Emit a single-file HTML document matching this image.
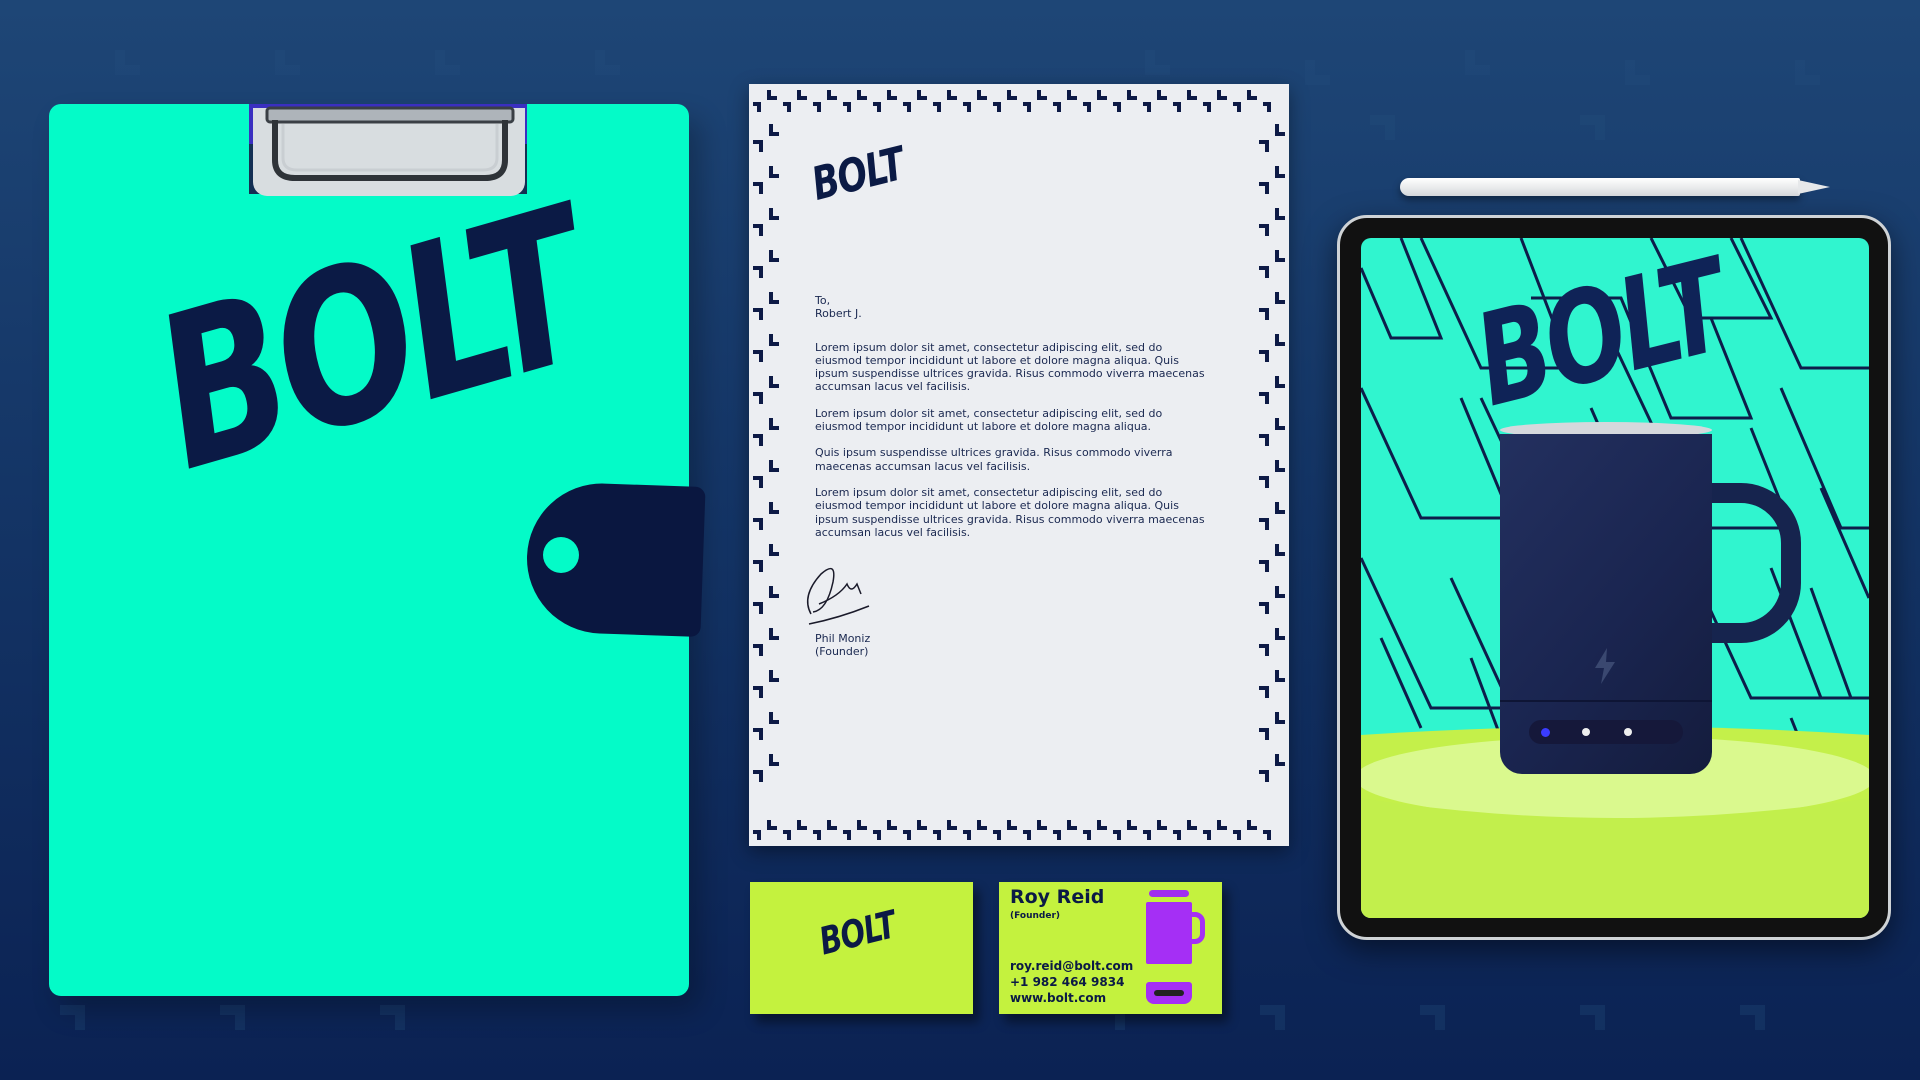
<!DOCTYPE html>
<html><head><style>
*{margin:0;padding:0;box-sizing:border-box}
body{width:1920px;height:1080px;overflow:hidden;position:relative;background:linear-gradient(180deg,#1e4676 0%,#143566 45%,#0b2253 100%);font-family:"Liberation Sans",sans-serif}
.abs{position:absolute}
.logo{position:absolute;font-family:"DejaVu Sans","Liberation Sans",sans-serif;font-weight:900;font-style:italic;color:#0b1a45;letter-spacing:-0.03em;line-height:1;transform-origin:left bottom;white-space:nowrap}
.letter p{font-size:11px;line-height:13.3px;color:#1a2850;margin-bottom:13px;font-family:"DejaVu Sans",sans-serif}
</style></head><body>
<svg class="abs" style="left:0;top:0" width="1920" height="1080">
<g fill="none" stroke="#24507f" stroke-width="10" opacity="0.3">
<path d="M120 50v20h20M280 50v20h20M440 50v20h20M600 50v20h20M1150 50v20h20M1310 60v20h20M1470 50v20h20M1630 60v20h20M1800 60v20h20M1370 120h20v20M1580 120h20v20M60 1010h20v20M220 1010h20v20M380 1010h20v20M1100 1010h20v20M1260 1010h20v20M1420 1010h20v20M1580 1010h20v20M1740 1010h20v20"/>
</g></svg>

<!-- clipboard -->
<div class="abs" style="left:60px;top:120px;width:640px;height:890px;background:#000;opacity:.25;filter:blur(14px);border-radius:10px"></div>
<div class="abs" style="left:243px;top:104px;width:292px;height:40px;background:#3a2fc0"></div>
<div class="abs" style="left:49px;top:104px;width:640px;height:892px;background:#04fbc8;border-radius:12px;clip-path:polygon(0 0,200px 0,200px 90px,478px 90px,478px 0,100% 0,100% 100%,0 100%)"></div>
<div class="abs" style="left:253px;top:108px;width:272px;height:88px;background:#d8dde0;border-radius:0 0 14px 14px"></div>
<svg class="abs" style="left:255px;top:100px" width="270" height="90"><rect x="12" y="8" width="246" height="14" rx="3" fill="#aeb4ba" stroke="#3a3f45" stroke-width="3"/><path d="M20 20v40q0 18 20 18h190q20 0 20-18V20" fill="none" stroke="#2e3338" stroke-width="6"/><path d="M28 24v34q0 12 14 12h186q14 0 14-12V24" fill="none" stroke="#c9ced2" stroke-width="3"/></svg>
<div class="logo" style="left:195px;top:340px;font-size:162px;transform:rotate(-16deg) scaleY(1.3)">BOLT</div>
<div class="abs" style="left:527px;top:484px;width:176px;height:150px;background:#0a1740;border-radius:75px 10px 10px 75px;transform:rotate(2deg)"></div>
<div class="abs" style="left:543px;top:537px;width:36px;height:36px;background:#04fbc8;border-radius:50%"></div>

<!-- letter -->
<div class="abs letter" style="left:749px;top:84px;width:540px;height:762px;background:#eceef2;box-shadow:0 6px 18px rgba(0,0,0,.4)">
<svg class="abs" style="left:0;top:0" width="540" height="762">
<g fill="none" stroke="#0d1a46" stroke-width="4">
<path d="M20 6v8h8M50 6v8h8M80 6v8h8M110 6v8h8M140 6v8h8M170 6v8h8M200 6v8h8M230 6v8h8M260 6v8h8M290 6v8h8M320 6v8h8M350 6v8h8M380 6v8h8M410 6v8h8M440 6v8h8M470 6v8h8M500 6v8h8
M4 20h6v8M34 20h6v8M64 20h6v8M94 20h6v8M124 20h6v8M154 20h6v8M184 20h6v8M214 20h6v8M244 20h6v8M274 20h6v8M304 20h6v8M334 20h6v8M364 20h6v8M394 20h6v8M424 20h6v8M454 20h6v8M484 20h6v8M514 20h6v8"/>
<path d="M20 736v8h8M50 736v8h8M80 736v8h8M110 736v8h8M140 736v8h8M170 736v8h8M200 736v8h8M230 736v8h8M260 736v8h8M290 736v8h8M320 736v8h8M350 736v8h8M380 736v8h8M410 736v8h8M440 736v8h8M470 736v8h8M500 736v8h8
M4 748h6v8M34 748h6v8M64 748h6v8M94 748h6v8M124 748h6v8M154 748h6v8M184 748h6v8M214 748h6v8M244 748h6v8M274 748h6v8M304 748h6v8M334 748h6v8M364 748h6v8M394 748h6v8M424 748h6v8M454 748h6v8M484 748h6v8M514 748h6v8"/>
<path d="M22 40v10h8M22 82v10h8M22 124v10h8M22 166v10h8M22 208v10h8M22 250v10h8M22 292v10h8M22 334v10h8M22 376v10h8M22 418v10h8M22 460v10h8M22 502v10h8M22 544v10h8M22 586v10h8M22 628v10h8M22 670v10h8
M4 58h8v10M4 100h8v10M4 142h8v10M4 184h8v10M4 226h8v10M4 268h8v10M4 310h8v10M4 352h8v10M4 394h8v10M4 436h8v10M4 478h8v10M4 520h8v10M4 562h8v10M4 604h8v10M4 646h8v10M4 688h8v10"/>
<path d="M528 40v10h8M528 82v10h8M528 124v10h8M528 166v10h8M528 208v10h8M528 250v10h8M528 292v10h8M528 334v10h8M528 376v10h8M528 418v10h8M528 460v10h8M528 502v10h8M528 544v10h8M528 586v10h8M528 628v10h8M528 670v10h8
M510 58h8v10M510 100h8v10M510 142h8v10M510 184h8v10M510 226h8v10M510 268h8v10M510 310h8v10M510 352h8v10M510 394h8v10M510 436h8v10M510 478h8v10M510 520h8v10M510 562h8v10M510 604h8v10M510 646h8v10M510 688h8v10"/>
</g>
<path d="M62 530q-10 -18 10 -40q16 -14 12 8q-6 28 -20 30M70 520q20 -8 28 -20q4 10 10 0l4 10M60 540q30 -6 60 -18" fill="none" stroke="#1a1a2a" stroke-width="1.5"/>
</svg>
<div class="logo" style="left:70px;top:90px;font-size:35px;transform:rotate(-14deg) scaleY(1.3)">BOLT</div>
<div class="abs" style="left:66px;top:210px;width:395px">
<p>To,<br>Robert J.</p>
<p style="margin-top:20px">Lorem ipsum dolor sit amet, consectetur adipiscing elit, sed do eiusmod tempor incididunt ut labore et dolore magna aliqua. Quis ipsum suspendisse ultrices gravida. Risus commodo viverra maecenas accumsan lacus vel facilisis.</p>
<p>Lorem ipsum dolor sit amet, consectetur adipiscing elit, sed do eiusmod tempor incididunt ut labore et dolore magna aliqua.</p>
<p>Quis ipsum suspendisse ultrices gravida. Risus commodo viverra maecenas accumsan lacus vel facilisis.</p>
<p>Lorem ipsum dolor sit amet, consectetur adipiscing elit, sed do eiusmod tempor incididunt ut labore et dolore magna aliqua. Quis ipsum suspendisse ultrices gravida. Risus commodo viverra maecenas accumsan lacus vel facilisis.</p>
</div>
<div class="abs" style="left:66px;top:548px;font-size:11px;line-height:13px;color:#1a2850;font-family:'DejaVu Sans',sans-serif">Phil Moniz<br>(Founder)</div>
</div>

<!-- cards -->
<div class="abs" style="left:750px;top:882px;width:223px;height:132px;background:#c4f23e;box-shadow:6px 8px 10px rgba(0,0,0,.45)">
<div class="logo" style="left:75px;top:50px;font-size:29px;transform:rotate(-14deg) scaleY(1.3)">BOLT</div></div>
<div class="abs" style="left:999px;top:882px;width:223px;height:132px;background:#c4f23e;box-shadow:6px 8px 10px rgba(0,0,0,.45);color:#0b1a45;font-family:'DejaVu Sans',sans-serif;font-weight:bold">
<div class="abs" style="left:11px;top:4px;font-size:19px">Roy Reid</div>
<div class="abs" style="left:11px;top:29px;font-size:9px">(Founder)</div>
<div class="abs" style="left:11px;top:76px;font-size:12px;line-height:16px">roy.reid@bolt.com<br>+1 982 464 9834<br>www.bolt.com</div>
<div class="abs" style="left:150px;top:8px;width:40px;height:7px;background:#a02ef0;border-radius:4px"></div>
<div class="abs" style="left:147px;top:20px;width:46px;height:62px;background:#a52ff5;border-radius:2px"></div>
<div class="abs" style="left:188px;top:30px;width:18px;height:32px;border:5px solid #a52ff5;border-radius:0 10px 10px 0"></div>
<div class="abs" style="left:147px;top:100px;width:46px;height:22px;background:#a52ff5;border-radius:3px 3px 8px 8px"></div>
<div class="abs" style="left:155px;top:108px;width:30px;height:6px;background:#222;border-radius:3px"></div>
</div>

<!-- pencil -->
<div class="abs" style="left:1400px;top:178px;width:400px;height:18px;background:linear-gradient(#fff,#d6d9dc);border-radius:9px 2px 2px 9px;box-shadow:0 4px 8px rgba(0,0,0,.4)"></div>
<div class="abs" style="left:1798px;top:180px;width:0;height:0;border-top:7px solid transparent;border-bottom:7px solid transparent;border-left:32px solid #e6e8ea"></div>

<!-- tablet -->
<div class="abs" style="left:1337px;top:215px;width:554px;height:725px;background:#111;border:3px solid #cfd3d6;border-radius:30px;box-shadow:0 10px 30px rgba(0,0,0,.5)"></div>
<div class="abs" style="left:1361px;top:238px;width:508px;height:680px;border-radius:10px;overflow:hidden;background:#30f5cf">
<svg class="abs" style="left:0;top:0" width="508" height="680"><g fill="none" stroke="#0d1d4a" stroke-width="3">
<path d="M0 30l30 70h50l-40-100M60 0l60 130h90l-50-130M170 60h90l50 120h80l-40-100M290 0l40 80h80l-40-80M380 0l60 130h68M0 150l60 130h90l-50-120M120 160l80 170h100l-70-160M250 100l90 190h90l-40-100M420 150l60 140h28M0 320l70 150h80l-60-130M170 330l60 140M330 330l60 130h100l-40-110M410 330l50 130h48M0 520l40 90M430 480l60 150M110 420l60 160M20 400l40 90M460 250l48 110"/>
</g>
<path d="M0 497 Q254 480 508 497 V680 H0Z" fill="#c4f04a"/>
<ellipse cx="254" cy="540" rx="260" ry="42" fill="#daf98e"/>
<path d="M0 560 Q254 600 508 560 V680 H0Z" fill="#c2ef4c"/>
</svg>
<div class="logo" style="left:135px;top:95px;font-size:94px;transform:rotate(-14deg) scaleY(1.35);color:#0f2357">BOLT</div>
<div class="abs" style="left:330px;top:245px;width:110px;height:160px;border:20px solid #16244e;border-radius:0 60px 60px 0"></div>
<div class="abs" style="left:139px;top:184px;width:212px;height:16px;background:#d5d8dc;border-radius:50%/8px"></div>
<div class="abs" style="left:139px;top:196px;width:212px;height:340px;background:linear-gradient(130deg,#23305f,#1a2550 55%,#141c3d);border-radius:0 0 22px 22px"></div>
<div class="abs" style="left:139px;top:462px;width:212px;height:2px;background:#0e1535"></div>
<div class="abs" style="left:168px;top:482px;width:154px;height:24px;background:#15183a;border-radius:12px"></div>
<div class="abs" style="left:180px;top:490px;width:9px;height:9px;background:#3a3cff;border-radius:50%"></div>
<div class="abs" style="left:221px;top:490px;width:8px;height:8px;background:#eee;border-radius:50%"></div>
<div class="abs" style="left:263px;top:490px;width:8px;height:8px;background:#eee;border-radius:50%"></div>
<svg class="abs" style="left:232px;top:410px" width="26" height="36"><path d="M14 0L2 20h9l-3 16L22 14h-9z" fill="#3a4870"/></svg>
</div>
</body></html>
